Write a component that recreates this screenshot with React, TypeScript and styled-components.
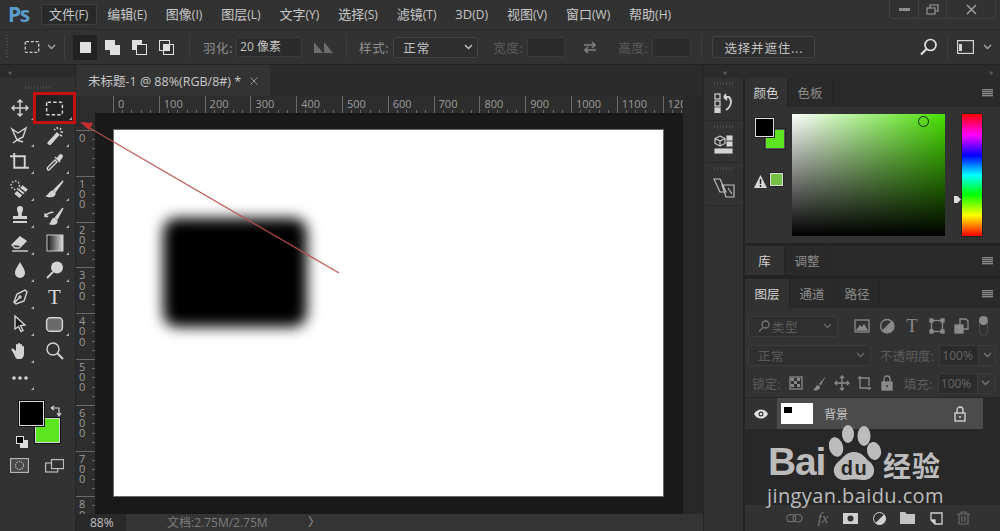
import React from "react";
import styled, { createGlobalStyle } from "styled-components";

const latin = `"Open Sans", "Noto Sans CJK SC", sans-serif`;

const GlobalStyle = createGlobalStyle`
  html, body { margin: 0; padding: 0; background: #323232; }
  body { font-family: ${latin}; }
  * { box-sizing: border-box; }
`;

const Page = styled.div`
  position: relative;
  width: 1000px;
  height: 531px;
  overflow: hidden;
  display: flex;
  flex-direction: column;
  background: #323232;
  color: #c4c4c4;
`;

/* ---- menu bar ---- */
const MenuBar = styled.div`
  height: 30px;
  flex: none;
  display: flex;
  align-items: flex-start;
  border-bottom: 1px solid #282828;
  padding-left: 8px;
`;
const Logo = styled.div`
  width: 33px;
  font: 700 21px/29px "Open Sans", sans-serif;
  color: #5a9ccc;
  letter-spacing: -1.5px;
`;
const MenuList = styled.div`
  display: flex;
  gap: 2.4px;
  margin-top: 4px;
`;
const MenuItem = styled.div<{ $active?: boolean }>`
  height: 21px;
  padding: 0 8.5px 0 8px;
  font-size: 13px;
  line-height: 21px;
  white-space: nowrap;
  color: #c8c8c8;
  border-radius: 2px;
  background: ${(p) => (p.$active ? "#292929" : "transparent")};
  box-shadow: ${(p) => (p.$active ? "inset 0 0 0 1px #3e3e3e" : "none")};
  small { font-size: 12px; }
`;
const WindowButtons = styled.div`
  margin-left: auto;
  margin-right: 4px;
  display: flex;
  height: 19px;
  border: 1px solid #404040;
  border-top: none;
  border-radius: 0 0 3px 3px;
`;
const WindowButton = styled.div<{ $w: number }>`
  width: ${(p) => p.$w}px;
  display: flex;
  align-items: center;
  justify-content: center;
  border-right: 1px solid #404040;
  &:last-child { border-right: none; }
`;

/* ---- options bar ---- */
const OptionsBar = styled.div`
  height: 35px;
  flex: none;
  display: flex;
  align-items: center;
  font-size: 12.5px;
  border-bottom: 1px solid #232323;
`;
const Divider = styled.div<{ $gap?: number }>`
  width: 1px;
  height: 24px;
  background: #3e3e3e;
  flex: none;
  margin: 0 ${(p) => p.$gap ?? 10}px;
`;
const Grip = styled.div`
  width: 2px;
  height: 24px;
  margin: 0 15px 0 6px;
  background: repeating-linear-gradient(to bottom, #4a4a4a 0 1px, transparent 1px 3px);
`;
const Spacer = styled.span<{ $w: number }>`
  width: ${(p) => p.$w}px;
  flex: none;
`;
const ModeButton = styled.div<{ $active?: boolean }>`
  width: 24px;
  height: 25px;
  margin-right: 3px;
  flex: none;
  display: flex;
  align-items: center;
  justify-content: center;
  background: ${(p) => (p.$active ? "#222" : "transparent")};
`;
const OptLabel = styled.span<{ $dim?: boolean; $left?: number }>`
  color: ${(p) => (p.$dim ? "#5c5c5c" : "#8e8e8e")};
  margin-left: ${(p) => p.$left ?? 0}px;
  white-space: nowrap;
  letter-spacing: 0.6px;
`;
const OptInput = styled.div<{ $w: number; $left?: number }>`
  width: ${(p) => p.$w}px;
  height: 20px;
  margin-left: ${(p) => p.$left ?? 4}px;
  background: #2b2b2b;
  border: 1px solid #3b3b3b;
  border-radius: 2px;
  padding-left: 3px;
  font-size: 12px;
  line-height: 18px;
  color: #c4c4c4;
  white-space: nowrap;
`;
const OptSelect = styled.div`
  width: 85px;
  height: 21px;
  margin-left: 4px;
  display: flex;
  align-items: center;
  justify-content: space-between;
  padding: 0 4px 0 9px;
  background: #2e2e2e;
  border: 1px solid #444;
  border-radius: 3px;
  letter-spacing: 1px;
`;
const OptButton = styled.div`
  width: 103px;
  height: 22px;
  display: flex;
  align-items: center;
  justify-content: center;
  border: 1px solid #444;
  border-radius: 3px;
  background: #2e2e2e;
  letter-spacing: 0.8px;
  color: #c4c4c4;
  white-space: nowrap;
`;

/* ---- workspace ---- */
const Workspace = styled.div`
  flex: 1;
  display: flex;
  min-height: 0;
`;
const CollapseStrip = styled.div<{ $align?: string }>`
  height: 13px;
  flex: none;
  display: flex;
  align-items: center;
  justify-content: ${(p) => p.$align ?? "flex-start"};
  padding: 0 8px;
  font-size: 8px;
  letter-spacing: -1px;
  color: #909090;
  background: #2b2b2b;
`;

/* ---- tools ---- */
const ToolsPanel = styled.div`
  width: 76px;
  flex: none;
  display: flex;
  flex-direction: column;
  border-right: 1px solid #262626;
`;
const ToolsGrip = styled.div`
  height: 14px;
  margin: 2.5px 25px 0;
  background: repeating-linear-gradient(to right, #4a4a4a 0 1px, transparent 1px 3px) center / 100% 3px no-repeat;
`;
const ToolGrid = styled.div`
  display: grid;
  grid-template-columns: 35px 35px;
  grid-auto-rows: 27px;
  padding: 0 0 0 2px;
  justify-items: center;
  align-items: center;
`;
const ToolCell = styled.div<{ $active?: boolean; $flag?: boolean }>`
  position: relative;
  width: ${(p) => (p.$active ? "37px" : "30px")};
  height: 26px;
  display: flex;
  align-items: center;
  justify-content: center;
  background: ${(p) => (p.$active ? "#232323" : "transparent")};
  &::before {
    content: "";
    display: ${(p) => (p.$flag ? "block" : "none")};
    position: absolute;
    right: 1px;
    bottom: 1px;
    border-style: solid;
    border-width: 0 0 3px 3px;
    border-color: transparent transparent #b0b0b0 transparent;
  }
  &::after {
    content: "";
    display: ${(p) => (p.$active ? "block" : "none")};
    position: absolute;
    inset: -3px;
    border: 3px solid #c80f10;
  }
`;
const TextToolGlyph = styled.span`
  font: 400 21px/1 "Liberation Serif", serif;
  color: #d6d6d6;
`;
const DimTextGlyph = styled(TextToolGlyph)`
  width: 16px;
  font-size: 18px;
  color: #8a8a8a;
  text-align: center;
`;
const SwatchArea = styled.div`
  position: relative;
  height: 44px;
  margin: 9.5px 0 0;
`;
const Swatch = styled.div<{ $bg: string; $x: number; $y: number; $w: number }>`
  position: absolute;
  left: ${(p) => p.$x}px;
  top: ${(p) => p.$y}px;
  width: ${(p) => p.$w}px;
  height: ${(p) => p.$w}px;
  background: ${(p) => p.$bg};
  box-shadow: 0 0 0 1px #111;
  border: 1px solid #d8d8d8;
`;
const SwapIcon = styled.div`
  position: absolute;
  left: 50px;
  top: -1px;
`;
const DefaultColors = styled.div`
  position: absolute;
  left: 16px;
  top: 30px;
`;
const ModeRow = styled.div`
  display: flex;
  align-items: center;
  gap: 16px;
  margin: 13px 0 0 10px;
`;

/* ---- document ---- */
const DocColumn = styled.div`
  width: 627px;
  flex: none;
  display: flex;
  flex-direction: column;
  background: #2b2b2b;
`;
const TabStrip = styled.div`
  height: 31px;
  flex: none;
  display: flex;
  background: #2b2b2b;
`;
const DocTab = styled.div`
  width: 194px;
  display: flex;
  align-items: center;
  justify-content: space-between;
  padding: 0 12px 0 12px;
  background: #333;
  font-size: 12.5px;
  color: #c8c8c8;
  white-space: nowrap;
`;
const DocRow = styled.div`
  flex: 1;
  display: flex;
  min-height: 0;
`;
const DocMain = styled.div`
  width: 607px;
  flex: none;
  display: flex;
  flex-direction: column;
`;
const RulerTop = styled.div`
  height: 17px;
  flex: none;
  display: flex;
  background: #2d2d2d;
  overflow: hidden;
`;
const RulerCorner = styled.div`
  width: 37px;
  flex: none;
`;
const RulerMark = styled.div`
  flex: 0 0 45.8px;
  height: 17px;
  padding-left: 4px;
  font-size: 11px;
  line-height: 16px;
  color: #9c9c9c;
  border-left: 1px solid #6a6a6a;
  background: repeating-linear-gradient(to right, transparent 0 8.2px, #6a6a6a 8.2px 9.2px) 0 100% / 100% 3px no-repeat;
`;
const DocBody = styled.div`
  flex: 1;
  display: flex;
  min-height: 0;
`;
const RulerLeft = styled.div`
  width: 19px;
  flex: none;
  background: #2d2d2d;
  padding-top: 17px;
  overflow: hidden;
`;
const RulerLeftMark = styled.div`
  height: 45.8px;
  padding: 2px 9px 0 3px;
  font-size: 11px;
  line-height: 10.2px;
  word-break: break-all;
  color: #9c9c9c;
  border-top: 1px solid #6a6a6a;
  background: repeating-linear-gradient(to bottom, transparent 0 8.2px, #6a6a6a 8.2px 9.2px) 100% 0 / 3px 100% no-repeat;
`;
const Pasteboard = styled.div`
  flex: 1;
  background: #191919;
  padding: 17px 0 0 19px;
`;
const Artboard = styled.div`
  width: 549px;
  height: 366px;
  background: #fff;
  padding: 88px 0 0 49px;
  box-shadow: 0 0 0 1px #6a6a6a;
  overflow: hidden;
`;
const BlurBlock = styled.div`
  width: 144px;
  height: 109px;
  background: #000;
  border-radius: 14px;
  filter: blur(7px);
`;
const ScrollGutter = styled.div`
  width: 20px;
  flex: none;
  background: #282828;
`;
const StatusBar = styled.div`
  height: 17px;
  flex: none;
  display: flex;
  font-size: 12px;
  line-height: 17px;
  background: #343434;
  color: #7d7d7d;
`;
const ZoomCell = styled.div`
  width: 50px;
  padding-left: 14px;
  background: #292929;
  color: #c0c0c0;
`;
const DocSize = styled.div`
  width: 182px;
  padding-left: 41px;
  white-space: nowrap;
`;
const StatusArrow = styled.div`
  color: #a0a0a0;
`;

/* ---- dock ---- */
const Dock = styled.div`
  width: 42px;
  flex: none;
  display: flex;
  flex-direction: column;
  background: #282828;
  border-left: 1px solid #262626;
`;
const DockBody = styled.div`
  flex: 1;
  padding: 0 1px 0 2px;
  background: #323232;
  border-right: 2px solid #252525;
`;
const DockButton = styled.div`
  height: 42.5px;
  display: flex;
  align-items: center;
  justify-content: center;
  padding-top: 8px;
  border-bottom: 1px solid #282828;
  background: repeating-linear-gradient(to right, #4a4a4a 0 1px, transparent 1px 3px) center 4px / 20px 3px no-repeat;
`;

/* ---- right panels ---- */
const Panels = styled.div`
  flex: 1;
  display: flex;
  flex-direction: column;
  min-width: 0;
  background: #232323;
`;
const Tabs = styled.div`
  height: 29px;
  flex: none;
  display: flex;
  align-items: stretch;
  background: #2a2a2a;
`;
const Tab = styled.div<{ $active?: boolean; $w: number }>`
  width: ${(p) => p.$w}px;
  display: flex;
  align-items: center;
  justify-content: center;
  font-size: 12.5px;
  color: ${(p) => (p.$active ? "#d2d2d2" : "#8c8c8c")};
  background: ${(p) => (p.$active ? "#323232" : "transparent")};
  border-right: 1px solid #262626;
`;
const TabMenu = styled.div`
  margin: auto 7px auto auto;
  width: 11px;
  height: 8px;
  background: repeating-linear-gradient(to bottom, #8a8a8a 0 1px, #4a4a4a 1px 2px);
`;
const ColorBody = styled.div`
  position: relative;
  height: 136px;
  flex: none;
  display: flex;
  align-items: flex-start;
  padding: 7px 0 0 47px;
  background: #323232;
`;
const ColorField = styled.div`
  position: relative;
  width: 153px;
  height: 122px;
  flex: none;
  background: linear-gradient(to top, #000, transparent), linear-gradient(to right, #fff, #47e000);
`;
const FieldCursor = styled.div`
  position: absolute;
  left: 126px;
  top: 2px;
  width: 11px;
  height: 11px;
  border: 1px solid #0d2a00;
  border-radius: 50%;
`;
const HueBar = styled.div`
  width: 20px;
  height: 122px;
  flex: none;
  margin-left: 17px;
  background: linear-gradient(to bottom, #f00 0%, #f0f 17%, #00f 34%, #0ff 50%, #0f0 66%, #ff0 83%, #f00 100%);
  box-shadow: 0 0 0 1px #222;
`;
const HuePointer = styled.div`
  position: absolute;
  left: 209px;
  top: 89px;
  width: 7px;
  height: 7px;
  background: #ddd;
  clip-path: polygon(0 0, 50% 0, 100% 50%, 50% 100%, 0 100%);
`;
const PanelSwatch = styled.div<{ $bg: string; $x: number; $y: number; $w: number; $edge: string }>`
  position: absolute;
  left: ${(p) => p.$x}px;
  top: ${(p) => p.$y}px;
  width: ${(p) => p.$w}px;
  height: ${(p) => p.$w}px;
  background: ${(p) => p.$bg};
  border: 1px solid ${(p) => p.$edge};
  box-shadow: 0 0 0 1px #222;
`;
const GamutIcon = styled.div`
  position: absolute;
  left: 9px;
  top: 64px;
`;
const LibraryTabs = styled(Tabs)`
  margin-top: 3px;
  margin-bottom: 4px;
`;
const LayersBody = styled.div`
  flex: 1;
  display: flex;
  flex-direction: column;
  min-height: 0;
  background: #323232;
`;
const LayerRow = styled.div<{ $h: number; $pad?: number; $top?: number }>`
  height: ${(p) => p.$h}px;
  flex: none;
  display: flex;
  align-items: center;
  padding-left: ${(p) => p.$pad ?? 3}px;
  padding-top: ${(p) => p.$top ?? 0}px;
  font-size: 12.5px;
  color: #5c5c5c;
`;
const RowLabel = styled.span<{ $left?: number }>`
  margin-left: ${(p) => p.$left ?? 0}px;
  white-space: nowrap;
  letter-spacing: 0.2px;
`;
const DimSelect = styled.div<{ $w: number }>`
  width: ${(p) => p.$w}px;
  height: 21px;
  flex: none;
  display: flex;
  align-items: center;
  justify-content: space-between;
  padding: 0 5px 0 9px;
  border: 1px solid #3c3c3c;
  border-radius: 3px;
  background: #2f2f2f;
  color: #5c5c5c;
  letter-spacing: 0.6px;
`;
const FilterLabel = styled.span`
  display: flex;
  align-items: center;
  gap: 2px;
`;
const IconRow = styled.div<{ $left: number; $gap: number }>`
  display: flex;
  align-items: center;
  gap: ${(p) => p.$gap}px;
  margin-left: ${(p) => p.$left}px;
`;
const ToggleDot = styled.div`
  position: relative;
  width: 9px;
  height: 20px;
  margin-left: 9px;
  border: 1px solid #4b4b4b;
  border-radius: 5px;
  &::after {
    content: "";
    position: absolute;
    left: -1px;
    top: -1px;
    width: 9px;
    height: 9px;
    border-radius: 50%;
    background: #8a8a8a;
  }
`;
const PercentField = styled.div`
  width: 57px;
  height: 21px;
  flex: none;
  display: flex;
  margin-left: 5px;
  background: #2b2b2b;
  border: 1px solid #3b3b3b;
  border-radius: 2px;
  font-size: 12px;
  line-height: 19px;
  color: #666;
  padding-left: 2px;
  justify-content: space-between;
`;
const PercentCaret = styled.div`
  width: 17px;
  display: flex;
  align-items: center;
  justify-content: center;
  background: #323232;
  border-left: 1px solid #3b3b3b;
`;
const LayerList = styled.div`
  flex: 1;
  background: #282828;
  border-top: 1px solid #262626;
`;
const LayerItem = styled.div`
  height: 31px;
  display: flex;
  background: #323232;
  width: 238px;
`;
const EyeCell = styled.div`
  width: 32px;
  flex: none;
  display: flex;
  align-items: center;
  justify-content: center;
`;
const LayerInfo = styled.div`
  flex: 1;
  display: flex;
  align-items: center;
  padding-left: 4px;
  background: #4b4b4b;
  font-size: 12px;
  color: #c8c8c8;
`;
const Thumb = styled.div`
  width: 32px;
  height: 21px;
  flex: none;
  background: #fff;
  padding: 4px 0 0 3px;
  margin-right: 11px;
`;
const ThumbMark = styled.div`
  width: 8px;
  height: 6px;
  background: #000;
`;
const LockSlot = styled.div`
  margin-left: auto;
  margin-right: 16px;
  display: flex;
`;
const LayerFooter = styled.div`
  height: 26px;
  flex: none;
  display: flex;
  align-items: center;
  justify-content: flex-end;
  gap: 14.5px;
  padding-right: 30px;
  background: #323232;
`;
const FxLabel = styled.span`
  font: italic 400 15px/1 "Liberation Serif", serif;
  color: #777;
`;

/* ---- overlays ---- */
const ArrowOverlay = styled.svg`
  position: absolute;
  left: 0;
  top: 0;
  pointer-events: none;
`;
const Watermark = styled.div`
  position: absolute;
  left: 767px;
  top: 424px;
  width: 190px;
  color: #bcbcbc;
  pointer-events: none;
`;
const MarkTop = styled.div`
  position: relative;
  height: 58px;
`;
const BaiText = styled.span`
  position: absolute;
  left: 1px;
  top: 16px;
  font: 700 39px/44px "Liberation Sans", sans-serif;
  letter-spacing: -1.2px;
`;
const Paw = styled.svg`
  position: absolute;
  left: 62px;
  top: 0;
`;
const JingText = styled.span`
  position: absolute;
  left: 116px;
  top: 23px;
  font: 700 28px/36px "Noto Sans CJK SC", sans-serif;
  letter-spacing: 1px;
`;
const MarkUrl = styled.div`
  font: 400 20px/28px "Open Sans", sans-serif;
  white-space: nowrap;
  letter-spacing: 0.4px;
`;

/* ---- icons ---- */
const C = "#d4d4d4";
const Ico = ({ s = 20, children }: { s?: number; children: React.ReactNode }) => (
  <svg width={s} height={s} viewBox="0 0 20 20" fill="none" stroke={C} strokeWidth="1.4">
    {children}
  </svg>
);

const MarqueeGlyph = ({ s = 20 }: { s?: number }) => (
  <Ico s={s}>
    <rect x="2.5" y="4" width="15" height="12" rx="1" strokeDasharray="3.2 2.1" />
  </Ico>
);
const Chevron = ({ c = "#a8a8a8" }: { c?: string }) => (
  <svg width="9" height="6" viewBox="0 0 9 6" fill="none" stroke={c} strokeWidth="1.3">
    <path d="M1 1l3.5 3.5L8 1" />
  </svg>
);

const tools: { key: string; icon: React.ReactNode; flag?: boolean; active?: boolean }[] = [
  { key: "move", flag: true, icon: <Ico><path d="M10 2v16M2 10h16M7.5 4.5L10 2l2.5 2.5M7.5 15.5L10 18l2.5-2.5M4.5 7.5L2 10l2.5 2.5M15.5 7.5L18 10l-2.5 2.5" /></Ico> },
  { key: "marquee", flag: true, active: true, icon: <MarqueeGlyph s={21} /> },
  { key: "lasso", flag: true, icon: <Ico><path d="M2 4l6 4 8-5-3 9-6 3zM7 15l-4 3" /><path d="M7 15l6 2" /></Ico> },
  { key: "wand", flag: true, icon: <Ico><path d="M3 18l9-10 1.8 1.8-9 10z" fill={C} /><path d="M12 2l.6 2M16 3l-1 2M18 7h-2.5M17 11l-2-1M9 4l1.5 1" /></Ico> },
  { key: "crop", flag: true, icon: <Ico s={21}><path d="M1 4h14v12M5 1v14h14" strokeWidth="1.8" /></Ico> },
  { key: "dropper", flag: true, icon: <Ico><path d="M3 18c-1-1-1-2 0-3l7-7 2 2-7 7c-.7.8-1.5 1.5-2 1z" /><path d="M10 5l5 5M12 7l3-4c1-1 3 1 2 2l-3 4" fill={C} /></Ico> },
  { key: "heal", flag: true, icon: <Ico s={21}><circle cx="6" cy="6" r="4" strokeDasharray="1.5 1.5" /><path d="M5 14l8-8 5 4-8 8z" fill={C} stroke="none" /><path d="M8 11l5 4M10.5 9l5 4" stroke="#323232" /></Ico> },
  { key: "brush", flag: true, icon: <Ico><path d="M18 2L9 11l1.5 1.5z" fill={C} /><path d="M8 12c-3 0-3 3-6 5 3 1 8 1 8-3z" fill={C} /></Ico> },
  { key: "stamp", flag: true, icon: <Ico><path d="M7 3a3 3 0 116 0c0 3-2 4-1 7h5v3H3v-3h5c1-3-1-4-1-7z" fill={C} stroke="none" /><path d="M3 15h14v2H3z" fill={C} stroke="none" /></Ico> },
  { key: "history", flag: true, icon: <Ico s={21}><path d="M18 2l-7 9 1.5 1.5z" fill={C} /><path d="M10 12c-3 0-2 3-4 5 3 1 7 0 6-3z" fill={C} /><path d="M9 6C6 6 3 7 1 10M1 7v3h3" /></Ico> },
  { key: "eraser", flag: true, icon: <Ico><path d="M2 12l8-8 6 4-7 7H5z" /><path d="M2 12l8-8 6 4-5 5z" fill={C} stroke="none" /><path d="M2 18h16" /></Ico> },
  { key: "gradient", flag: true, icon: (
    <svg width="18" height="18" viewBox="0 0 18 18">
      <defs>
        <linearGradient id="toolGrad" x1="0" y1="0" x2="1" y2="0">
          <stop offset="0" stopColor="#111" />
          <stop offset="1" stopColor="#ddd" />
        </linearGradient>
      </defs>
      <rect x="1" y="1" width="16" height="16" fill="url(#toolGrad)" stroke="#ccc" />
    </svg>
  ) },
  { key: "blur", flag: true, icon: <Ico><path d="M10 2c2 4 5 7 5 11a5 5 0 01-10 0c0-4 3-7 5-11z" fill={C} stroke="none" /></Ico> },
  { key: "dodge", flag: true, icon: <Ico><circle cx="12" cy="7.5" r="6" fill={C} stroke="none" /><path d="M8 12l-6 6" strokeWidth="1.8" /></Ico> },
  { key: "pen", flag: true, icon: <Ico><path d="M15 3l2 2-3 9-8 3-2-2 3-8z" /><path d="M4 16l5-5" /><circle cx="10" cy="10" r="1" /></Ico> },
  { key: "type", flag: false, icon: <TextToolGlyph>T</TextToolGlyph> },
  { key: "select", flag: true, icon: <Ico><path d="M5 2l10 9-4.5.5 2.5 5-2 1-2.5-5L5 15z" fill="#1b1b1b" stroke={C} /></Ico> },
  { key: "shape", flag: true, icon: <Ico s={21}><rect x="2.5" y="3.5" width="15" height="13" rx="3.5" fill="#6a6a6a" /></Ico> },
  { key: "hand", flag: true, icon: <Ico><path d="M4 13L1.5 9c-.5-1 1-2 2-1L6 10V4c0-1.5 2-1.5 2 0v3-4c0-1.5 2-1.5 2 0v4-3c0-1.5 2-1.5 2 0v4-2c0-1.5 2-1.5 2 0v7c0 3-2 5-4 5H8c-2 0-3-2-4-5z" fill={C} stroke="none" /></Ico> },
  { key: "zoom", flag: false, icon: <Ico><circle cx="8" cy="8" r="6" /><path d="M12.5 12.5L18 18" strokeWidth="2" /></Ico> },
  { key: "more", flag: true, icon: <svg width="18" height="4" viewBox="0 0 18 4" fill={C}><circle cx="3" cy="2" r="1.8" /><circle cx="9" cy="2" r="1.8" /><circle cx="15" cy="2" r="1.8" /></svg> },
];

const menus: [string, string][] = [
  ["文件", "(F)"], ["编辑", "(E)"], ["图像", "(I)"], ["图层", "(L)"], ["文字", "(Y)"], ["选择", "(S)"],
  ["滤镜", "(T)"], ["3D", "(D)"], ["视图", "(V)"], ["窗口", "(W)"], ["帮助", "(H)"],
];

const rulerTop = ["0", "100", "200", "300", "400", "500", "600", "700", "800", "900", "1000", "1100", "120"];
const rulerLeft = ["0", "100", "200", "300", "400", "500", "600", "700", "80"];

const Dim = "#8a8a8a";
const DimIco = ({ children }: { children: React.ReactNode }) => (
  <svg width="16" height="16" viewBox="0 0 16 16" fill="none" stroke={Dim} strokeWidth="1.3">
    {children}
  </svg>
);

const LockGlyph = ({ c = Dim }: { c?: string }) => (
  <svg width="14" height="16" viewBox="0 0 14 16" fill="none" stroke={c} strokeWidth="1.3">
    <path d="M4 7V4a3 3 0 016 0v3" />
    <rect x="2" y="7" width="10" height="8" fill={c === Dim ? Dim : "none"} />
    <circle cx="7" cy="11" r="1" fill={c === Dim ? "#323232" : c} stroke="none" />
  </svg>
);

export default function App() {
  return (
    <Page>
      <GlobalStyle />
      <MenuBar>
        <Logo>Ps</Logo>
        <MenuList>
          {menus.map(([name, key], i) => (
            <MenuItem key={key} $active={i === 0}>
              {name}
              <small>{key}</small>
            </MenuItem>
          ))}
        </MenuList>
        <WindowButtons>
          <WindowButton $w={29}>
            <svg width="11" height="3"><rect width="11" height="3" fill="#8c8c8c" /></svg>
          </WindowButton>
          <WindowButton $w={28}>
            <svg width="13" height="11" viewBox="0 0 13 11" fill="none" stroke="#8c8c8c" strokeWidth="1.3">
              <rect x="4" y="1" width="8" height="6" />
              <rect x="1" y="4" width="8" height="6" fill="#323232" />
            </svg>
          </WindowButton>
          <WindowButton $w={48}>
            <svg width="11" height="11" viewBox="0 0 11 11" stroke="#a0a0a0" strokeWidth="1.5">
              <path d="M1 1l9 9M10 1l-9 9" />
            </svg>
          </WindowButton>
        </WindowButtons>
      </MenuBar>

      <OptionsBar>
        <Grip />
        <MarqueeGlyph s={18} />
        <Spacer $w={6} />
        <Chevron />
        <Divider $gap={8} />
        <ModeButton $active>
          <svg width="11" height="11"><rect width="11" height="11" fill="#e0e0e0" /></svg>
        </ModeButton>
        <ModeButton>
          <svg width="15" height="15"><rect width="10" height="10" fill="#e0e0e0" /><rect x="5" y="5" width="10" height="10" fill="#e0e0e0" /></svg>
        </ModeButton>
        <ModeButton>
          <svg width="15" height="15" fill="none"><rect width="10" height="10" fill="#e0e0e0" /><rect x="4.5" y="4.5" width="10" height="10" fill="#323232" stroke="#e0e0e0" /></svg>
        </ModeButton>
        <ModeButton>
          <svg width="15" height="15" fill="none" stroke="#e0e0e0"><rect x=".5" y=".5" width="10" height="10" /><rect x="4.5" y="4.5" width="10" height="10" /><rect x="4.5" y="4.5" width="6" height="6" fill="#e0e0e0" /></svg>
        </ModeButton>
        <Divider $gap={8} />
        <OptLabel $left={5}>羽化:</OptLabel>
        <OptInput $w={66} $left={3}>20 像素</OptInput>
        <Spacer $w={12} />
        <svg width="20" height="12" viewBox="0 0 20 12" fill="#6c6c6c"><path d="M0 12V1l9 11zM10 12V1l9 11z" /></svg>
        <Divider $gap={12} />
        <OptLabel>样式:</OptLabel>
        <OptSelect>正常<Chevron c="#c8c8c8" /></OptSelect>
        <OptLabel $dim $left={15}>宽度:</OptLabel>
        <OptInput $w={38} />
        <Spacer $w={18} />
        <svg width="14" height="13" viewBox="0 0 14 13" fill="none" stroke="#808080" strokeWidth="1.6"><path d="M1 4h11M9 1l3 3-3 3M13 9H2M5 6L2 9l3 3" /></svg>
        <OptLabel $dim $left={21}>高度:</OptLabel>
        <OptInput $w={39} />
        <Divider $gap={10} />
        <OptButton>选择并遮住...</OptButton>
        <Spacer $w={105} />
        <svg width="18" height="18" viewBox="0 0 18 18" fill="none" stroke="#e0e0e0" strokeWidth="1.7"><circle cx="10.5" cy="7" r="5.5" /><path d="M6.5 11L1 16.5" strokeWidth="2.2" /></svg>
        <Divider $gap={9} />
        <svg width="17" height="14" viewBox="0 0 17 14" fill="none" stroke="#d4d4d4" strokeWidth="1.2"><rect x=".6" y=".6" width="15.8" height="12.8" /><rect x="2" y="4" width="3" height="7" fill="#d4d4d4" stroke="none" /></svg>
        <Spacer $w={9} />
        <Chevron />
      </OptionsBar>

      <Workspace>
        <ToolsPanel>
          <CollapseStrip>‹‹</CollapseStrip>
          <ToolsGrip />
          <ToolGrid>
            {tools.map((t) => (
              <ToolCell key={t.key} $active={t.active} $flag={t.flag}>
                {t.icon}
              </ToolCell>
            ))}
          </ToolGrid>
          <SwatchArea>
            <Swatch $bg="#5ce61f" $x={35} $y={17} $w={25} />
            <Swatch $bg="#000" $x={19} $y={0} $w={25} />
            <SwapIcon>
              <svg width="12" height="12" viewBox="0 0 12 12" fill="none" stroke="#d4d4d4" strokeWidth="1.2"><path d="M1 3h8v7M1 3l3-2M1 3l3 2M7 8l2 3 2-3" /></svg>
            </SwapIcon>
            <DefaultColors>
              <svg width="12" height="12"><rect x="4" y="4" width="8" height="8" fill="#ddd" /><rect x=".5" y=".5" width="7" height="7" fill="#000" stroke="#ddd" /></svg>
            </DefaultColors>
          </SwatchArea>
          <ModeRow>
            <svg width="19" height="15" viewBox="0 0 19 15" fill="none" stroke="#bdbdbd" strokeWidth="1.1"><rect x=".6" y=".6" width="17.8" height="13.8" fill="#484848" /><circle cx="9.5" cy="7.5" r="4" strokeDasharray="1.5 1" /></svg>
            <svg width="19" height="14" viewBox="0 0 19 14" fill="none" stroke="#bdbdbd" strokeWidth="1.2"><rect x=".6" y="4" width="12" height="9" /><rect x="6.5" y=".6" width="12" height="9" fill="#323232" /></svg>
          </ModeRow>
        </ToolsPanel>

        <DocColumn>
          <TabStrip>
            <DocTab>
              <span>未标题-1 @ 88%(RGB/8#) *</span>
              <svg width="8" height="8" viewBox="0 0 8 8" stroke="#8f8f8f"><path d="M.5.5l7 7M7.5.5l-7 7" /></svg>
            </DocTab>
          </TabStrip>
          <DocRow>
            <DocMain>
              <RulerTop>
                <RulerCorner />
                {rulerTop.map((n) => (
                  <RulerMark key={n}>{n}</RulerMark>
                ))}
              </RulerTop>
              <DocBody>
                <RulerLeft>
                  {rulerLeft.map((n) => (
                    <RulerLeftMark key={n}>{n}</RulerLeftMark>
                  ))}
                </RulerLeft>
                <Pasteboard>
                  <Artboard>
                    <BlurBlock />
                  </Artboard>
                </Pasteboard>
              </DocBody>
            </DocMain>
            <ScrollGutter />
          </DocRow>
          <StatusBar>
            <ZoomCell>88%</ZoomCell>
            <DocSize>文档:2.75M/2.75M</DocSize>
            <StatusArrow>〉</StatusArrow>
          </StatusBar>
        </DocColumn>

        <Dock>
          <CollapseStrip $align="center">‹‹</CollapseStrip>
          <DockBody>
            <DockButton>
              <svg width="20" height="20" viewBox="0 0 20 20" fill="none" stroke="#d4d4d4" strokeWidth="1.2">
                <rect x="1" y="1" width="5" height="5" /><rect x="1" y="8" width="5" height="5" /><rect x="1" y="15" width="5" height="4.5" fill="#d4d4d4" />
                <path d="M10 4h5c3 3 3 9-3 13M10 4l2-3M10 4l3 3" strokeWidth="1.8" />
              </svg>
            </DockButton>
            <DockButton>
              <svg width="20" height="20" viewBox="0 0 20 20" fill="none" stroke="#d4d4d4" strokeWidth="1.1">
                <path d="M6 1l5 2.5v5L6 11 1 8.5v-5zM1 3.5L6 6l5-2.5M6 6v5" />
                <rect x="13" y="1" width="5" height="4" fill="#d4d4d4" /><rect x="13" y="7" width="5" height="4" fill="#d4d4d4" />
                <rect x="1" y="14" width="17" height="4" fill="#d4d4d4" />
              </svg>
            </DockButton>
            <DockButton>
              <svg width="22" height="22" viewBox="0 0 22 22" fill="none" stroke="#c4c4c4" strokeWidth="1.1">
                <path d="M1 2h6l6 13H7zM9 8h7l5 0v12H13z" />
                <path d="M15 11l4 6" />
              </svg>
            </DockButton>
          </DockBody>
        </Dock>

        <Panels>
          <CollapseStrip $align="flex-end">››</CollapseStrip>
          <Tabs>
            <Tab $active $w={43}>颜色</Tab>
            <Tab $w={45}>色板</Tab>
            <TabMenu />
          </Tabs>
          <ColorBody>
            <PanelSwatch $bg="#5ce61f" $x={20} $y={22} $w={20} $edge="#555" />
            <PanelSwatch $bg="#000" $x={10} $y={11} $w={19} $edge="#ddd" />
            <GamutIcon>
              <svg width="13" height="13" viewBox="0 0 13 13"><path d="M6.5 0L13 13H0z" fill="#d8d8d8" /><path d="M6.5 4v5M6.5 10v2" stroke="#222" strokeWidth="1.4" /></svg>
            </GamutIcon>
            <PanelSwatch $bg="#76c043" $x={25} $y={66} $w={13} $edge="#ddd" />
            <ColorField>
              <FieldCursor />
            </ColorField>
            <HueBar />
            <HuePointer />
          </ColorBody>
          <LibraryTabs>
            <Tab $active $w={40}>库</Tab>
            <Tab $w={45}>调整</Tab>
            <TabMenu />
          </LibraryTabs>
          <Tabs>
            <Tab $active $w={45}>图层</Tab>
            <Tab $w={45}>通道</Tab>
            <Tab $w={45}>路径</Tab>
            <TabMenu />
          </Tabs>
          <LayersBody>
            <LayerRow $h={33} $top={3}>
              <DimSelect $w={90}>
                <FilterLabel>
                  <svg width="12" height="12" viewBox="0 0 12 12" fill="none" stroke="#777" strokeWidth="1.3"><circle cx="7.5" cy="4.5" r="3.5" /><path d="M5 7.5L1 11.5" /></svg>
                  类型
                </FilterLabel>
                <Chevron c="#666" />
              </DimSelect>
              <IconRow $left={16} $gap={9}>
                <DimIco><rect x="1" y="2" width="14" height="12" /><path d="M3 12l3-4 2 2 2-3 3 5z" fill={Dim} /></DimIco>
                <DimIco><circle cx="8" cy="8" r="6.5" /><path d="M13 3.5A6.5 6.5 0 013.5 13z" fill={Dim} /></DimIco>
                <DimTextGlyph>T</DimTextGlyph>
                <DimIco><rect x="2.5" y="2.5" width="11" height="11" /><rect x="1" y="1" width="3" height="3" fill={Dim} /><rect x="12" y="1" width="3" height="3" fill={Dim} /><rect x="1" y="12" width="3" height="3" fill={Dim} /><rect x="12" y="12" width="3" height="3" fill={Dim} /></DimIco>
                <DimIco><path d="M6 1h6l2 2v8H6z" /><rect x="1" y="7" width="8" height="8" fill={Dim} /></DimIco>
              </IconRow>
              <ToggleDot />
            </LayerRow>
            <LayerRow $h={28}>
              <DimSelect $w={123}>
                <span>正常</span>
                <Chevron c="#666" />
              </DimSelect>
              <RowLabel $left={9}>不透明度:</RowLabel>
              <PercentField>
                <span>100%</span>
                <PercentCaret><Chevron c="#777" /></PercentCaret>
              </PercentField>
            </LayerRow>
            <LayerRow $h={28} $pad={7}>
              <RowLabel>锁定:</RowLabel>
              <IconRow $left={7} $gap={7}>
                <DimIco><rect x="2" y="2" width="12" height="12" /><rect x="3" y="3" width="3" height="3" fill={Dim} stroke="none" /><rect x="9" y="3" width="3" height="3" fill={Dim} stroke="none" /><rect x="6" y="6" width="3" height="3" fill={Dim} stroke="none" /><rect x="3" y="9" width="3" height="3" fill={Dim} stroke="none" /><rect x="9" y="9" width="3" height="3" fill={Dim} stroke="none" /></DimIco>
                <DimIco><path d="M15 1L8 9l1.5 1.5zM7 10c-2 0-2 3-5 5 3 1 7 0 7-3z" fill={Dim} stroke="none" /></DimIco>
                <DimIco><path d="M8 1v14M1 8h14M6 3l2-2 2 2M6 13l2 2 2-2M3 6L1 8l2 2M13 6l2 2-2 2" /></DimIco>
                <DimIco><path d="M3 3h9v8M1 3h2M3 1v12h9M12 13v2M14 13h-2" /></DimIco>
                <LockGlyph />
              </IconRow>
              <RowLabel $left={10}>填充:</RowLabel>
              <PercentField>
                <span>100%</span>
                <PercentCaret><Chevron c="#777" /></PercentCaret>
              </PercentField>
            </LayerRow>
            <LayerList>
              <LayerItem>
                <EyeCell>
                  <svg width="14" height="10" viewBox="0 0 14 10"><path d="M0 5c3-6 11-6 14 0-3 6-11 6-14 0z" fill="#e0e0e0" /><circle cx="7" cy="5" r="2.5" fill="#323232" /><circle cx="7" cy="5" r="1.3" fill="#e0e0e0" /></svg>
                </EyeCell>
                <LayerInfo>
                  <Thumb>
                    <ThumbMark />
                  </Thumb>
                  背景
                  <LockSlot>
                    <LockGlyph c="#d8d8d8" />
                  </LockSlot>
                </LayerInfo>
              </LayerItem>
            </LayerList>
            <LayerFooter>
              <svg width="17" height="9" viewBox="0 0 17 9" fill="none" stroke="#6c6c6c" strokeWidth="1.3"><rect x=".7" y=".7" width="9" height="7" rx="3.5" /><rect x="7" y=".7" width="9" height="7" rx="3.5" /></svg>
              <FxLabel>fx</FxLabel>
              <svg width="15" height="11"><rect width="15" height="11" fill="#d0d0d0" /><circle cx="7.5" cy="5.5" r="3" fill="#323232" /></svg>
              <svg width="13" height="13" viewBox="0 0 13 13"><circle cx="6.5" cy="6.5" r="6" fill="none" stroke="#d0d0d0" /><path d="M11 2.5A6 6 0 012.5 11z" fill="#d0d0d0" /></svg>
              <svg width="15" height="12" viewBox="0 0 15 12"><path d="M0 12V0h5l2 2h8v10z" fill="#c4c4c4" /></svg>
              <svg width="13" height="13" viewBox="0 0 13 13" fill="none" stroke="#d0d0d0" strokeWidth="1.3"><path d="M1 1h11v11H5L1 8z" /><path d="M1 8h4v4" fill="#d0d0d0" /></svg>
              <svg width="13" height="14" viewBox="0 0 13 14" fill="none" stroke="#6c6c6c" strokeWidth="1.2"><path d="M0 3h13M4 3V1h5v2M2 3v10h9V3M5 5v6M8 5v6" /></svg>
            </LayerFooter>
          </LayersBody>
        </Panels>
      </Workspace>

      <ArrowOverlay width="1000" height="531" viewBox="0 0 1000 531">
        <path d="M339 273L88 127" stroke="#b8504e" strokeWidth="1.4" fill="none" opacity="0.9" />
        <path d="M80 122l13 1-4 7z" fill="#c43030" />
      </ArrowOverlay>

      <Watermark>
        <MarkTop>
          <BaiText>Bai</BaiText>
          <Paw width="56" height="58" viewBox="0 0 56 58" fill="#bcbcbc">
            <ellipse cx="19" cy="10" rx="6" ry="9" />
            <ellipse cx="35" cy="12" rx="6.5" ry="10" />
            <ellipse cx="7" cy="23" rx="7" ry="10" transform="rotate(-15 7 23)" />
            <ellipse cx="45" cy="27" rx="7" ry="9" transform="rotate(-15 45 27)" />
            <path d="M25 28c8 0 11 6 16 10 8 7 4 19-8 18-5-1-11-1-16 0C5 57 1 45 9 38c5-4 8-10 16-10z" />
            <text x="25.5" y="51" textAnchor="middle" fill="#282828" fontFamily="Liberation Sans, sans-serif" fontWeight="700" fontSize="20" letterSpacing="1.5">du</text>
          </Paw>
          <JingText>经验</JingText>
        </MarkTop>
        <MarkUrl>jingyan.baidu.com</MarkUrl>
      </Watermark>
    </Page>
  );
}
